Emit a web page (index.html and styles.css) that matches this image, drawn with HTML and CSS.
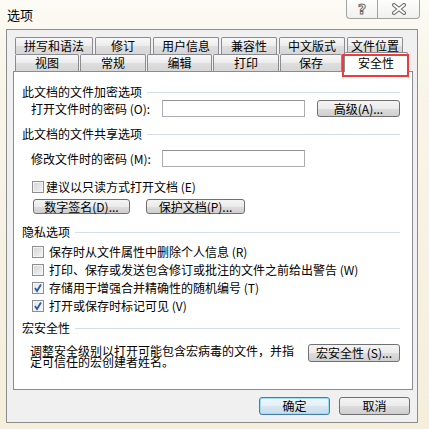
FILE: index.html
```html
<!DOCTYPE html>
<html lang="zh-CN">
<head>
<meta charset="utf-8">
<title>选项</title>
<link rel="stylesheet" href="styles.css">
</head>
<body>
<div class="window">
  <div class="titlebar">
    <span class="title">选项</span>
    <div class="caption">
      <div class="cbtn help"><span class="qmark">?</span></div>
      <div class="cbtn close">
        <svg width="16" height="12" viewBox="0 0 16 12"><path d="M3 2 L13 10 M13 2 L3 10" stroke="#6a6a6a" stroke-width="4" stroke-linecap="round"/><path d="M3 2 L13 10 M13 2 L3 10" stroke="#ffffff" stroke-width="2" stroke-linecap="round"/></svg>
      </div>
    </div>
  </div>
  <div class="client">
    <div class="tabs">
      <div class="tabrow">
        <div class="tab w78">拼写和语法</div>
        <div class="tab w55">修订</div>
        <div class="tab w66">用户信息</div>
        <div class="tab w56">兼容性</div>
        <div class="tab w66">中文版式</div>
        <div class="tab w56">文件位置</div>
      </div>
      <div class="tabrow">
        <div class="tab w64">视图</div>
        <div class="tab w66">常规</div>
        <div class="tab w65">编辑</div>
        <div class="tab w66">打印</div>
        <div class="tab w61">保存</div>
        <div class="tab sel">安全性<span class="redbox"></span></div>
      </div>
    </div>
    <div class="panel">
      <div class="heading h1">此文档的文件加密选项</div>
      <div class="field">
        <span class="label">打开文件时的密码 (O):</span>
        <span class="input"></span>
        <span class="btn adv">高级(A)...</span>
      </div>
      <div class="heading h2">此文档的文件共享选项</div>
      <div class="field f2">
        <span class="label">修改文件时的密码 (M):</span>
        <span class="input"></span>
      </div>
      <div class="check c1"><span class="box"></span><span class="ctext">建议以只读方式打开文档 (E)</span></div>
      <div class="btnrow">
        <span class="btn sig">数字签名(D)...</span>
        <span class="btn prot">保护文档(P)...</span>
      </div>
      <div class="heading h3">隐私选项</div>
      <div class="checks">
        <div class="check"><span class="box"></span><span class="ctext wide">保存时从文件属性中删除个人信息 (R)</span></div>
        <div class="check"><span class="box"></span><span class="ctext wide">打印、保存或发送包含修订或批注的文件之前给出警告 (W)</span></div>
        <div class="check"><span class="box on"><svg width="10" height="10" viewBox="0 0 10 10"><path d="M2 5 L4 8 L8 1.5" fill="none" stroke="#2a5ca8" stroke-width="1.8"/></svg></span><span class="ctext wide">存储用于增强合并精确性的随机编号 (T)</span></div>
        <div class="check"><span class="box on"><svg width="10" height="10" viewBox="0 0 10 10"><path d="M2 5 L4 8 L8 1.5" fill="none" stroke="#2a5ca8" stroke-width="1.8"/></svg></span><span class="ctext wide">打开或保存时标记可见 (V)</span></div>
      </div>
      <div class="heading h4">宏安全性</div>
      <div class="macro">
        <p class="mtext">调整安全级别以打开可能包含宏病毒的文件，并指定可信任的宏创建者姓名。</p>
        <span class="btn mac">宏安全性 (S)...</span>
      </div>
    </div>
    <div class="footer">
      <span class="btn ok">确定</span>
      <span class="btn cancel">取消</span>
    </div>
  </div>
</div>
</body>
</html>
```

FILE: styles.css
```css
html, body {
  margin: 0;
  padding: 0;
}
body {
  width: 429px;
  height: 429px;
  overflow: hidden;
  font-family: "Noto Sans CJK SC", "Noto Sans", sans-serif;
  font-size: 12px;
  color: #000;
}
.window {
  width: 429px;
  height: 429px;
  background: linear-gradient(#fcfbf5 0px, #f9f6ea 60px, #f4eedb 100%);
}
.titlebar {
  height: 29px;
  display: flex;
  align-items: flex-start;
}
.title {
  font-size: 13px;
  line-height: 14px;
  margin: 8px 0 0 7px;
}
.caption {
  margin-left: auto;
  margin-right: 9px;
  display: flex;
}
.cbtn {
  box-sizing: border-box;
  height: 19px;
  border: 1px solid #a2a2a2;
  border-top: none;
  background: linear-gradient(#fefefe, #f0f0ee);
  display: flex;
  align-items: center;
  justify-content: center;
}
.help {
  width: 31px;
  border-radius: 0 0 0 4px;
  border-right: none;
}
.close {
  width: 43px;
  border-radius: 0 0 4px 0;
}
.qmark {
  font-family: "DejaVu Sans", sans-serif;
  font-weight: bold;
  font-size: 14px;
  line-height: 14px;
  color: #fff;
  -webkit-text-stroke: 1px #6a6a6a;
}
.client {
  box-sizing: border-box;
  margin-left: 6px;
  width: 412px;
  height: 394px;
  border: 1px solid #8d8d8d;
  background: #f0f0f0;
  padding: 7px 4px 0 6px;
}
.tabs {
  margin-left: 2px;
}
.tabrow {
  display: flex;
  gap: 2px;
  height: 17px;
}
.tabrow + .tabrow {
  gap: 1px;
}
.tab {
  box-sizing: border-box;
  height: 17px;
  border: 1px solid #8a8c92;
  border-bottom: none;
  border-radius: 2px 2px 0 0;
  background: linear-gradient(#f8f8f8, #ececec 50%, #dedede 51%, #d6d6d6);
  text-align: center;
  line-height: 16px;
}
.w78 { width: 78px; }
.w55 { width: 56px; }
.w66 { width: 66px; }
.w56 { width: 56px; }
.w64 { width: 64px; }
.w65 { width: 65px; }
.w61 { width: 62px; }
.tab.sel {
  position: relative;
  z-index: 2;
  width: 64px;
  height: 20px;
  margin-top: -2px;
  margin-left: 1px;
  background: #fff;
  line-height: 19px;
}
.redbox {
  position: absolute;
  left: -3px;
  top: 1px;
  right: -2px;
  bottom: -5px;
  border: 2px solid #ee3b3b;
  box-sizing: border-box;
}
.panel {
  box-sizing: border-box;
  width: 400px;
  height: 319px;
  border: 1px solid #8a8c92;
  background: #fff;
  padding: 0 12px 0 8px;
}
.heading {
  display: flex;
  align-items: center;
  height: 14px;
  line-height: 14px;
  white-space: nowrap;
}
.heading::after {
  content: "";
  flex: 1;
  height: 1px;
  background: #d6dde4;
  margin-left: 5px;
}
.h1 { margin-top: 13px; }
.h2 { margin-top: 10px; }
.h3 { margin-top: 11px; }
.h4 { margin-top: 6px; }
.field {
  display: flex;
  align-items: center;
  height: 17px;
  margin-top: 1px;
  padding-left: 9px;
}
.field.f2 {
  margin-top: 9px;
}
.label {
  width: 131px;
  white-space: nowrap;
  line-height: 14px;
}
.input {
  box-sizing: border-box;
  width: 143px;
  height: 17px;
  border: 1px solid #abadb3;
  border-top-color: #8f9297;
  background: #fff;
}
.btn {
  box-sizing: border-box;
  display: flex;
  align-items: center;
  justify-content: center;
  border: 1px solid #707070;
  border-radius: 3px;
  background: linear-gradient(#f4f4f4, #ebebeb 50%, #dddddd 51%, #cfcfcf);
  line-height: 12px;
  white-space: nowrap;
}
.adv {
  width: 83px;
  height: 17px;
  margin-left: 12px;
}
.check {
  display: flex;
  align-items: center;
  height: 18px;
  padding-left: 10px;
}
.check.c1 {
  height: 13px;
  margin-top: 13px;
}
.box {
  box-sizing: border-box;
  width: 12px;
  height: 12px;
  border: 1px solid #8e8f8f;
  background: linear-gradient(135deg, #d4d4d4, #f4f4f4);
  box-shadow: inset 0 0 0 1px #f4f4f4;
  display: flex;
  align-items: center;
  justify-content: center;
  flex: none;
}
.box.on {
  background: linear-gradient(135deg, #e6e6e6, #fafafa);
}
.ctext {
  margin-left: 2px;
  line-height: 14px;
  white-space: nowrap;
}
.ctext.wide {
  margin-left: 5px;
}
.btnrow {
  display: flex;
  gap: 16px;
  margin-top: 6px;
  padding-left: 11px;
}
.sig {
  width: 97px;
  height: 15px;
}
.prot {
  width: 99px;
  height: 15px;
}
.checks {
  margin-top: 4px;
}
.macro {
  display: flex;
  align-items: flex-start;
  margin-top: 9px;
}
.mtext {
  margin: 1px 0 0 8px;
  width: 266px;
  line-height: 11px;
}
.mac {
  margin-left: auto;
  width: 92px;
  height: 18px;
}
.footer {
  display: flex;
  justify-content: flex-end;
  gap: 9px;
  margin-top: 7px;
  margin-right: 3px;
}
.ok, .cancel {
  width: 71px;
  height: 18px;
}
.ok {
  border-color: #3c7fb1;
  box-shadow: inset 0 0 0 1px #9fdcf4;
  background: linear-gradient(#eef6fb, #e4eff7 50%, #d6e6f2 51%, #c9dcea);
}
```
